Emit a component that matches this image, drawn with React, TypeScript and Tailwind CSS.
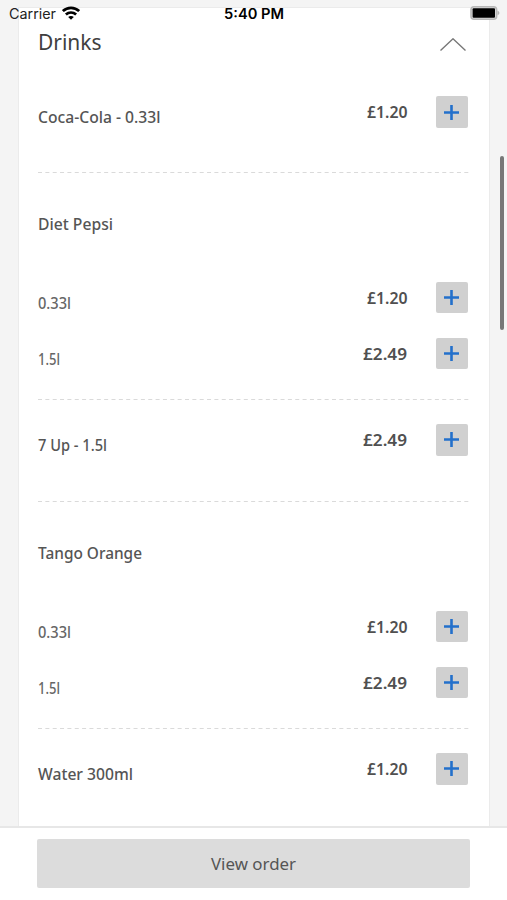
import React from 'react';
import clsx from 'clsx';

interface Option {
  name: string;
  price: string;
  nameWidth: number;
}

interface Product {
  title?: string;
  titleWidth?: number;
  options: Option[];
}

const products: Product[] = [
  { options: [{ name: 'Coca-Cola - 0.33l', price: '£1.20', nameWidth: 122.5 }] },
  {
    title: 'Diet Pepsi',
    titleWidth: 75,
    options: [
      { name: '0.33l', price: '£1.20', nameWidth: 33 },
      { name: '1.5l', price: '£2.49', nameWidth: 22 },
    ],
  },
  { options: [{ name: '7 Up - 1.5l', price: '£2.49', nameWidth: 69 }] },
  {
    title: 'Tango Orange',
    titleWidth: 104,
    options: [
      { name: '0.33l', price: '£1.20', nameWidth: 33 },
      { name: '1.5l', price: '£2.49', nameWidth: 22 },
    ],
  },
  { options: [{ name: 'Water 300ml', price: '£1.20', nameWidth: 95 }] },
];

// Text stretched to an exact width
const FitText: React.FC<{ width: number; className?: string; children: string }> = ({
  width,
  className,
  children,
}) => (
  <svg width={width} height="24" className={clsx('block overflow-visible', className)}>
    <text x="0" y="18" textLength={width} lengthAdjust="spacingAndGlyphs" fill="currentColor">
      {children}
    </text>
  </svg>
);

const StatusBar: React.FC = () => (
  <div className="absolute inset-x-0 top-0 h-[26px] font-['Inter','Liberation_Sans',sans-serif] text-black">
    <div className="grid h-full grid-cols-3 items-center pl-[9px] pr-[7px]">
      <div className="flex items-center gap-[6px]">
        <FitText width={47} className="text-[14px] text-[#222]">Carrier</FitText>
        <svg width="18" height="14" viewBox="0 0 18 14" fill="none" stroke="black" strokeWidth="2.7">
          <path d="M.9 5.100C5.500 .8 12.500 .8 17.100 5.100" />
          <path d="M3.900 8.500C6.800 5.800 11.200 5.800 14.100 8.500" />
          <path d="M9 13.800L6.200 11C7.700 9.600 10.300 9.600 11.800 11Z" fill="black" stroke="none" />
        </svg>
      </div>
      <div className="flex justify-center">
        <FitText width={60} className="text-[14px] font-semibold">5:40 PM</FitText>
      </div>
      <div className="flex justify-end">
        <svg width="30" height="14" viewBox="0 0 30 14">
          <rect x="1" y=".8" width="25.600" height="12.400" rx="3" fill="#ddd" stroke="#b8b8b8" strokeWidth="1.600" />
          <rect x="2.600" y="2.300" width="22.400" height="9.400" rx="1" fill="#000" />
          <path d="M27.500 4.800C30 5.500 30 8.500 27.500 9.200Z" fill="#b5b5b5" />
        </svg>
      </div>
    </div>
  </div>
);

const OptionRow: React.FC<{ option: Option; muted?: boolean }> = ({ option, muted }) => (
  <div className="flex h-8 items-center">
    <FitText
      width={option.nameWidth}
      className={clsx('mt-[10px] text-[16.5px] font-medium', muted ? 'text-[#666]' : 'text-[#555]')}
    >
      {option.name}
    </FitText>
    <FitText
      width={option.price === '£1.20' ? 40.5 : 44}
      className="ml-auto mr-[29px] text-[16px] font-semibold text-[#505050]"
    >
      {option.price}
    </FitText>
    <button className="mr-[2.5px] flex h-[31.5px] w-[31.5px] items-center justify-center rounded-[2px] bg-[#d0d0d0]">
      <svg width="15" height="15" viewBox="0 0 15 15" stroke="#2370cb" strokeWidth="2.6">
        <path d="M7.500 0V15M0 7.500H15" />
      </svg>
    </button>
  </div>
);

const DashedLine: React.FC = () => (
  <svg width="432" height="1" className="block">
    <path d="M0 .5H432" stroke="#dadada" strokeDasharray="4 3.350" />
  </svg>
);

const App: React.FC = () => {
  return (
    <div className="relative flex h-[900px] w-[507px] flex-col overflow-hidden bg-[#f4f4f4] font-['Noto_Sans','Open_Sans',sans-serif]">
      <main className="flex min-h-0 flex-1 overflow-hidden pl-[18px] pt-[7px]">
        {/* Menu category */}
        <section className="h-[900px] w-[472px] shrink-0 border border-[#ebebeb] bg-white pl-[19px] pr-[19px]">
          <div className="flex h-[68px] items-center justify-between">
            <FitText width={63.5} className="mt-[3px] text-[22px] text-[#404040]">Drinks</FitText>
            <svg width="26" height="13" viewBox="0 0 26 13" className="mr-[4.5px] mt-1" fill="none" stroke="#777" strokeWidth="1.400">
              <path d="M.5 12.500L13 .8L25.500 12.500" />
            </svg>
          </div>

          {products.map((product, i) => (
            <div key={i}>
              {i > 0 && <DashedLine />}
              {product.title ? (
                <div className="h-[226px] pt-[39.5px]">
                  <FitText width={product.titleWidth!} className="text-[16.5px] font-medium text-[#555]">
                    {product.title}
                  </FitText>
                  <div className="mt-[45.5px] flex flex-col gap-6">
                    {product.options.map((option) => (
                      <OptionRow key={option.name} option={option} muted />
                    ))}
                  </div>
                </div>
              ) : (
                <div className={i === 0 ? 'h-[95.5px] pt-5' : 'h-[101px] pt-[24.4px]'}>
                  <OptionRow option={product.options[0]} />
                </div>
              )}
            </div>
          ))}
        </section>

        {/* Scroll indicator */}
        <div className="ml-[9.5px] mt-[149px] h-[174px] w-[4px] shrink-0 rounded-full bg-[#777]" />
      </main>

      <footer className="h-[74px] border-t-2 border-[#e7e7e7] bg-white px-[37px] pt-[11px]">
        <button className="flex h-[49px] w-[433px] items-center justify-center rounded-[2px] bg-[#dcdcdc] text-[#555]">
          <FitText width={85} className="text-[16.5px]">View order</FitText>
        </button>
      </footer>

      <StatusBar />
    </div>
  );
};

export default App;
